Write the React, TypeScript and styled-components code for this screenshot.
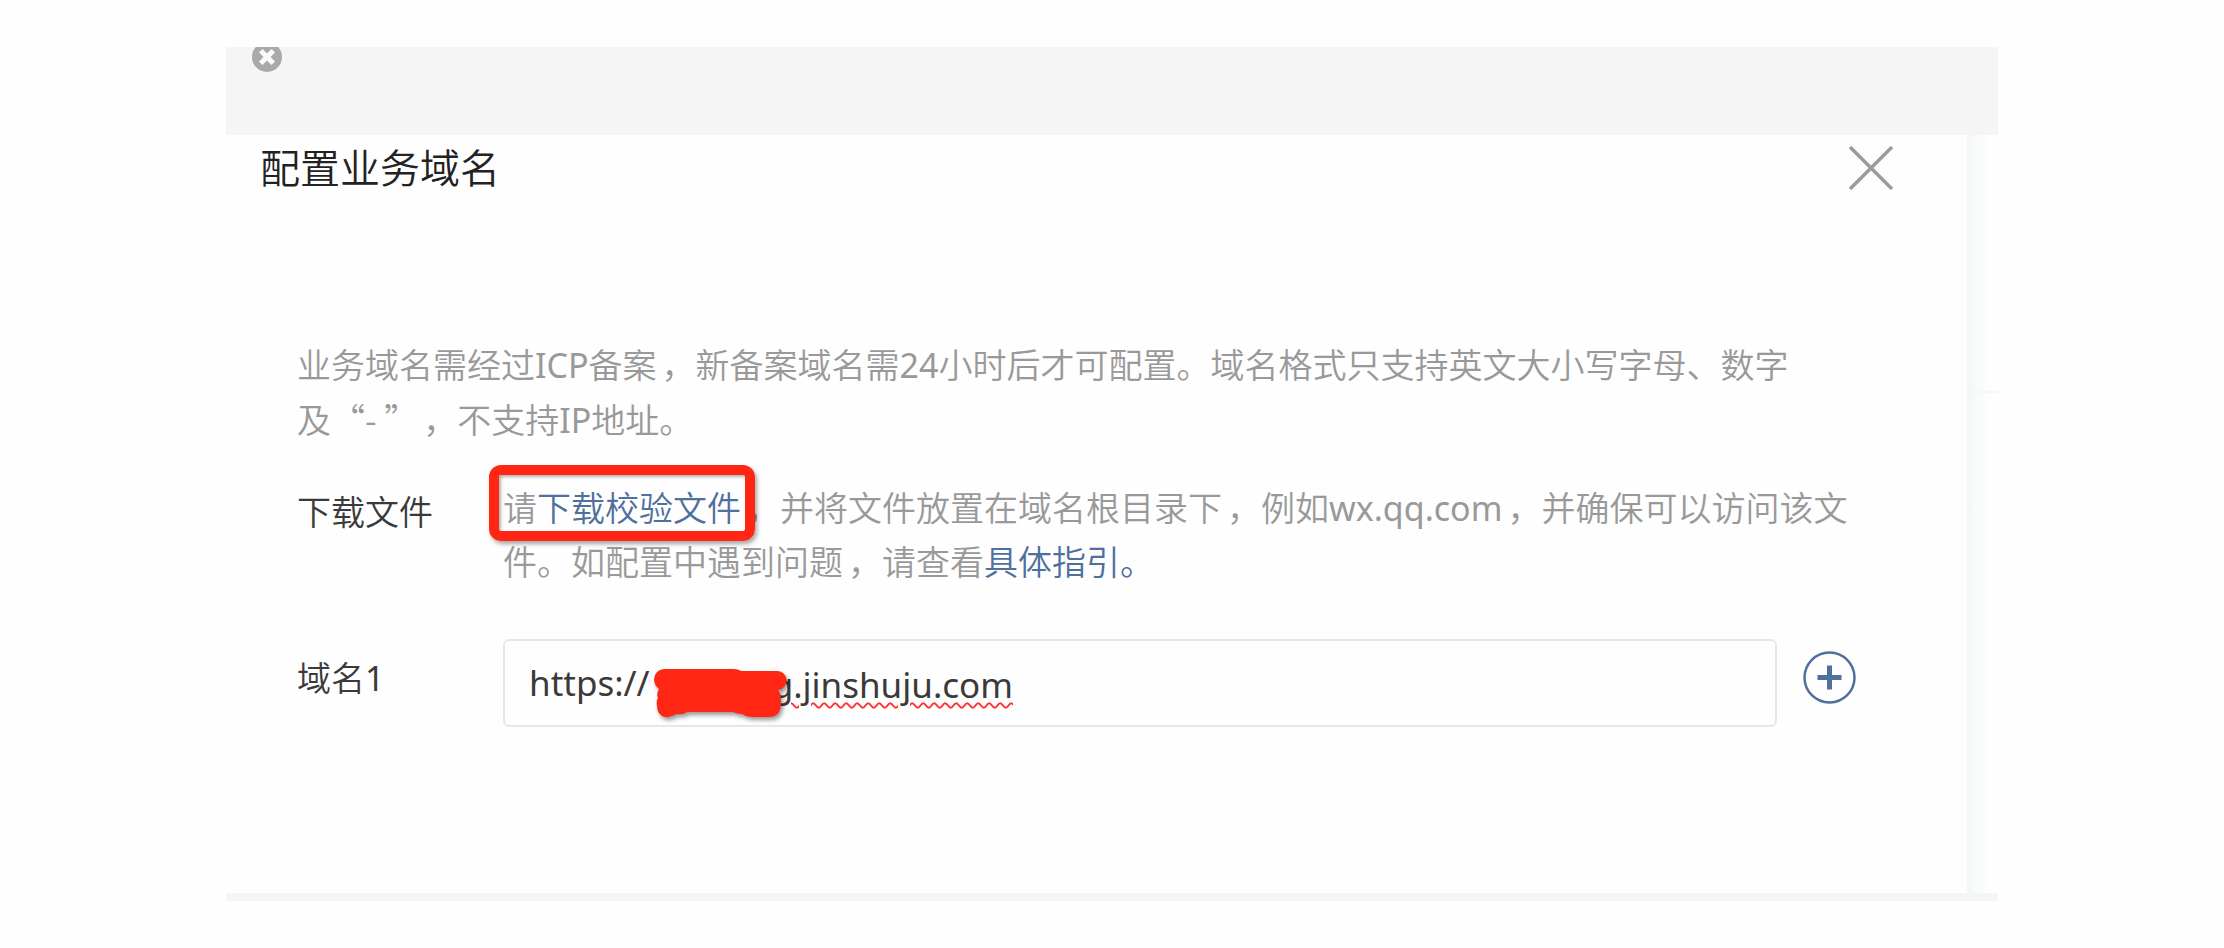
import React, { useState } from 'react';
import styled, { createGlobalStyle } from 'styled-components';

const red = '#ff2713';
const blue = '#4f6f9d';

const GlobalStyle = createGlobalStyle`
  *, *::before, *::after { box-sizing: border-box; }
  body {
    margin: 0;
    background: #fefefe;
    color: #3a3a3a;
    font-family: 'Noto Sans', 'Noto Sans CJK SC DemiLight', 'Noto Sans CJK SC', sans-serif;
    font-size: 34px;
    font-weight: 400;
    line-height: 54px;
    text-spacing-trim: space-all;
  }
`;

const Frame = styled.div`
  margin: 47px 226px;
`;

const TopBar = styled.header`
  display: flex;
  align-items: flex-start;
  height: 88px;
  padding-left: 26px;
  background: #f5f5f5;
`;

const IconButton = styled.button`
  display: flex;
  flex: none;
  padding: 0;
  border: 0;
  background: none;
  cursor: pointer;
`;

const Stage = styled.div`
  display: flex;
  border-bottom: 8px solid #f5f5f5;
`;

const Dialog = styled.section`
  flex: 1;
  padding: 0 111px 166px 71px;
`;

const Backdrop = styled.aside`
  display: flex;
  flex: none;
  flex-direction: column;
  width: 31px;
  background: linear-gradient(90deg, #f2f5f7 0, #f8fafb 8px, #fdfefe 24px);
`;

const BackdropTop = styled.div`
  height: 258px;
  border-bottom: 2px solid #f5f7f8;
`;

const DialogHeader = styled.div`
  display: flex;
  align-items: center;
  justify-content: space-between;
  height: 66px;
  margin: 0 -37px 137px;
`;

const Title = styled.h1`
  margin: 0;
  color: #222;
  font-size: 40px;
  font-weight: 350;
  line-height: 66px;
`;

const Hint = styled.p`
  margin: 0;
  color: #999;
`;

const Intro = styled(Hint)`
  padding-right: 56px;
`;

const WideQuote = styled.span`
  font-family: 'Noto Sans CJK SC DemiLight', 'Noto Sans CJK SC', sans-serif;
`;

/* Full-width comma drawn towards the middle of its cell. */
const Comma = styled.span`
  padding-left: 5px;
`;

const Row = styled.div<{ $gap: number }>`
  display: flex;
  align-items: flex-start;
  margin-top: ${(p) => p.$gap}px;
`;

const Label = styled.label`
  flex: none;
  width: 206px;
  padding-top: 12px;
`;

const RowTitle = styled.div`
  flex: none;
  width: 206px;
  padding-top: 4px;
`;

const Link = styled.a`
  color: ${blue};
  text-decoration: none;
`;

const Marked = styled.span`
  position: relative;
`;

const Highlight = styled.span`
  position: absolute;
  inset: -20px -14px -10px -14px;
  border: 10px solid ${red};
  border-radius: 12px;
  box-shadow: 2px 3px 4px rgba(0, 0, 0, 0.35), inset 2px 2px 3px rgba(0, 0, 0, 0.3);
  pointer-events: none;
`;

const Field = styled.div`
  display: flex;
  flex: 1;
  align-items: center;
  height: 88px;
  margin-right: 26px;
  padding: 0 24px;
  border: 2px solid #e7e7eb;
  border-radius: 6px;
  font-size: 35px;
`;

const AddButton = styled(IconButton)`
  margin-top: 12px;
`;

const Redaction = styled.svg`
  position: relative;
  flex: none;
  margin: 20px -16px 0 4px;
  filter: drop-shadow(2px 3px 2px rgba(0, 0, 0, 0.4));
`;

const DomainInput = styled.input`
  flex: 1;
  min-width: 0;
  padding: 4px 0 0;
  border: 0;
  outline: 0;
  background: none;
  color: inherit;
  font: inherit;
  text-decoration: underline wavy #f33 2px;
  text-underline-offset: 4px;
`;

export default function App() {
  const [domain, setDomain] = useState('g.jinshuju.com');

  return (
    <>
      <GlobalStyle />
      <Frame>
        <TopBar>
          <IconButton aria-label="清除">
            <svg width="30" height="25" viewBox="0 5 30 25">
              <circle cx="15" cy="15" r="15" fill="#a9a9a9" />
              <path d="M10.5 10.5l9 9M19.5 10.5l-9 9" stroke="#fafafa" strokeWidth="5" strokeLinecap="square" />
            </svg>
          </IconButton>
        </TopBar>
        <Stage>
          <Dialog>
            <DialogHeader>
              <Title>配置业务域名</Title>
              <IconButton aria-label="关闭">
                <svg width="44" height="44" viewBox="0 0 44 44">
                  <path d="M1 1l42 42M43 1L1 43" stroke="#9b9b9b" strokeWidth="3.5" />
                </svg>
              </IconButton>
            </DialogHeader>
            <Intro>
              业务域名需经过ICP备案<Comma>，</Comma>新备案域名需24小时后才可配置。域名格式只支持英文大小写字母、数字及<WideQuote>“- ”</WideQuote><Comma>，</Comma>不支持IP地址。
            </Intro>
            <Row $gap={34}>
              <RowTitle>下载文件</RowTitle>
              <Hint>
                <Marked>
                  请<Link href="#verify-file">下载校验文件</Link>
                  <Highlight />
                </Marked>
                <Comma>，</Comma>并将文件放置在域名根目录下<Comma>，</Comma>例如wx.qq.com<Comma>，</Comma>并确保可以访问该文件。如配置中遇到问题<Comma>，</Comma>请查看<Link href="#guide">具体指引。</Link>
              </Hint>
            </Row>
            <Row $gap={50}>
              <Label htmlFor="domain">域名1</Label>
              <Field>
                <span>https://</span>
                <Redaction width="134" height="50" viewBox="0 0 134 50" aria-hidden="true">
                  <path
                    d="M10 1H80Q84 1 87 3H122A9 9 0 0 1 124 22Q127 26 127 32V37Q126 49 115 49H97Q92 49 88 46Q83 46 79 44H33Q29 47 22 46Q16 50 11 49Q3 47 3 38Q2 32 4 30Q2 26 5 21Q0 17 0 11Q1 2 10 1Z"
                    fill={red}
                  />
                </Redaction>
                <DomainInput id="domain" value={domain} onChange={(e) => setDomain(e.target.value)} />
              </Field>
              <AddButton aria-label="添加域名">
                <svg width="53" height="53" viewBox="0 0 53 53" fill="none" stroke={blue}>
                  <circle cx="26.5" cy="26.5" r="25" strokeWidth="2.5" />
                  <path d="M26.5 14.5v24M14.5 26.5h24" strokeWidth="5" />
                </svg>
              </AddButton>
            </Row>
          </Dialog>
          <Backdrop>
            <BackdropTop />
          </Backdrop>
        </Stage>
      </Frame>
    </>
  );
}
